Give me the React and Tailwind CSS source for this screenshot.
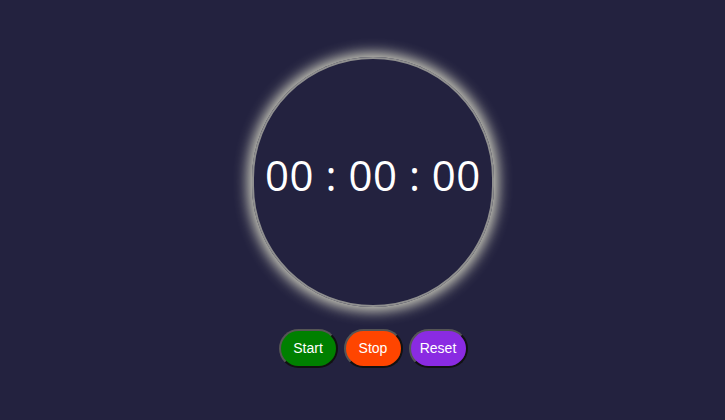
export default function App() {
  const buttons = [
    { label: 'Start', cls: 'bg-[#008000]' },
    { label: 'Stop', cls: 'bg-[#ff4500]' },
    { label: 'Reset', cls: 'bg-[#8a2be2]' },
  ]

  return (
    <div className="w-[725px] h-[420px] bg-[#23223f] flex flex-col items-center pt-[57px] pl-[21px]">
      {/* Clock face */}
      <div className="w-[242px] h-[250px] rounded-full border-[2px] border-[#8f8f8f] shadow-[0_0_14px_4px_#d6d6c4] flex items-center justify-center">
        <span className="text-white text-[42px] tracking-[0.5px] font-['Open_Sans',sans-serif] leading-none mt-[-15px]">
          00 : 00 : 00
        </span>
      </div>

      {/* Controls */}
      <div className="flex gap-[6px] mt-[22px]">
        {buttons.map(({ label, cls }) => (
          <button
            key={label}
            className={`${cls} w-[59px] h-[39px] rounded-full text-white text-[14px] font-['Liberation_Sans',sans-serif] border-2 border-t-[#555] border-l-[#555] border-b-[#111] border-r-[#111]`}
          >
            {label}
          </button>
        ))}
      </div>
    </div>
  )
}
